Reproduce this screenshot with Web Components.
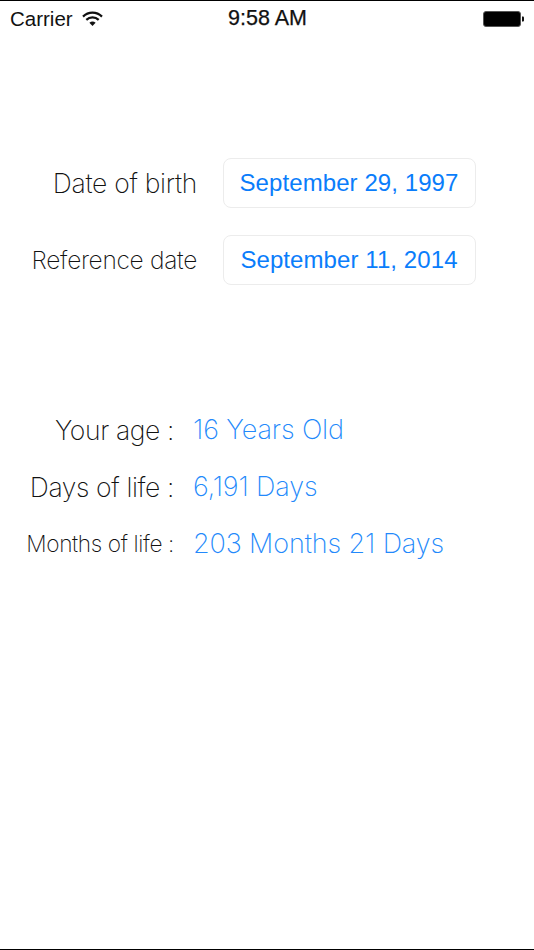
<!DOCTYPE html>
<html>
<head>
<meta charset="utf-8">
<title>Age</title>
<style>
  html, body { margin: 0; height: 100%; background: #fff; }
  body { font-family: "Liberation Sans", Arial, sans-serif; }
</style>
</head>
<body>
<age-screen>
  <status-bar carrier="Carrier" time="9:58 AM"></status-bar>
  <date-row label="Date of birth" value="September 29, 1997" size="26.5"></date-row>
  <date-row label="Reference date" value="September 11, 2014" size="24.5"></date-row>
  <result-row slot="results" label="Your age :" value="16 Years Old" size="26.5"></result-row>
  <result-row slot="results" label="Days of life :" value="6,191 Days" size="26.5"></result-row>
  <result-row slot="results" label="Months of life :" value="203 Months 21 Days" size="22.7"></result-row>
</age-screen>

<script>
class AgeScreen extends HTMLElement {
  connectedCallback() {
    this.attachShadow({ mode: 'open' });
    this.shadowRoot.innerHTML = `
      <style>
        :host {
          display: flex;
          flex-direction: column;
          box-sizing: border-box;
          height: 950px;
          background: #fff;
          border-top: 1px solid #000;
          border-bottom: 1px solid #000;
          overflow: hidden;
        }
        .dates {
          display: flex;
          flex-direction: column;
          gap: 27px;
          margin-top: 118px;
        }
        .results {
          display: flex;
          flex-direction: column;
          margin-top: 116px;
        }
      </style>
      <slot name="status"></slot>
      <div class="dates"><slot></slot></div>
      <div class="results"><slot name="results"></slot></div>
    `;
  }
}
customElements.define('age-screen', AgeScreen);

class StatusBar extends HTMLElement {
  connectedCallback() {
    this.slot = 'status';
    this.attachShadow({ mode: 'open' });
    this.shadowRoot.innerHTML = `
      <style>
        :host {
          display: grid;
          grid-template-columns: 1fr auto 1fr;
          align-items: center;
          box-sizing: border-box;
          height: 39px;
          padding: 0 9px 4px 10px;
          color: #111;
          font-family: "Liberation Sans", Arial, sans-serif;
        }
        .left { display: flex; align-items: center; gap: 9px; font-size: 20.5px; }
        .time { font-size: 21.5px; -webkit-text-stroke: 0.25px #111; }
        .right { display: flex; justify-content: flex-end; }
        svg { display: block; }
      </style>
      <div class="left">
        <span>${this.getAttribute('carrier')}</span>
        <svg width="21" height="16" viewBox="0 0 21 16">
          <path d="M1 5.6 A13.5 13.5 0 0 1 20 5.6" fill="none" stroke="#111" stroke-width="2.2"/>
          <path d="M4.3 8.9 A9 9 0 0 1 16.7 8.9" fill="none" stroke="#111" stroke-width="2.2"/>
          <path d="M7.4 11.8 A4.6 4.6 0 0 1 13.6 11.8 L10.5 15 Z" fill="#111"/>
        </svg>
      </div>
      <div class="time">${this.getAttribute('time')}</div>
      <div class="right">
        <svg width="42" height="16" viewBox="0 0 42 16">
          <rect x="0.5" y="0.5" width="37" height="15" rx="2.5" fill="#000" stroke="#555"/>
          <path d="M39 5.5 h1 a1 1 0 0 1 1 1 v3 a1 1 0 0 1 -1 1 h-1 Z" fill="#111"/>
        </svg>
      </div>
    `;
  }
}
customElements.define('status-bar', StatusBar);

class DateRow extends HTMLElement {
  connectedCallback() {
    this.attachShadow({ mode: 'open' });
    this.shadowRoot.innerHTML = `
      <style>
        :host {
          display: grid;
          grid-template-columns: 197px 253px;
          column-gap: 26px;
          align-items: center;
          height: 50px;
        }
        .label {
          text-align: right;
          font: 200 ${this.getAttribute('size')}px Inter, "Liberation Sans", sans-serif;
          letter-spacing: -0.3px;
          color: #111;
          white-space: nowrap;
          padding-bottom: 1px;
        }
        .value {
          box-sizing: border-box;
          height: 50px;
          display: flex;
          align-items: center;
          justify-content: center;
          border: 1px solid #ececec;
          border-radius: 8px;
          padding: 0 1px 1px 0;
          font: 400 24px "Liberation Sans", Arial, sans-serif;
          letter-spacing: 0.08px;
          color: #0a7dfb;
          white-space: nowrap;
        }
      </style>
      <div class="label">${this.getAttribute('label')}</div>
      <div class="value">${this.getAttribute('value')}</div>
    `;
  }
}
customElements.define('date-row', DateRow);

class ResultRow extends HTMLElement {
  connectedCallback() {
    this.attachShadow({ mode: 'open' });
    this.shadowRoot.innerHTML = `
      <style>
        :host {
          display: grid;
          grid-template-columns: 174px auto;
          column-gap: 19px;
          align-items: center;
          height: 57px;
        }
        .label {
          text-align: right;
          font: 200 ${this.getAttribute('size')}px Inter, "Liberation Sans", sans-serif;
          letter-spacing: -0.38px;
          color: #111;
          white-space: nowrap;
        }
        .value {
          font: 200 27px Inter, "Liberation Sans", sans-serif;
          letter-spacing: -0.12px;
          color: #2389fb;
          white-space: nowrap;
        }
      </style>
      <div class="label">${this.getAttribute('label')}</div>
      <div class="value">${this.getAttribute('value')}</div>
    `;
  }
}
customElements.define('result-row', ResultRow);
</script>
</body>
</html>
